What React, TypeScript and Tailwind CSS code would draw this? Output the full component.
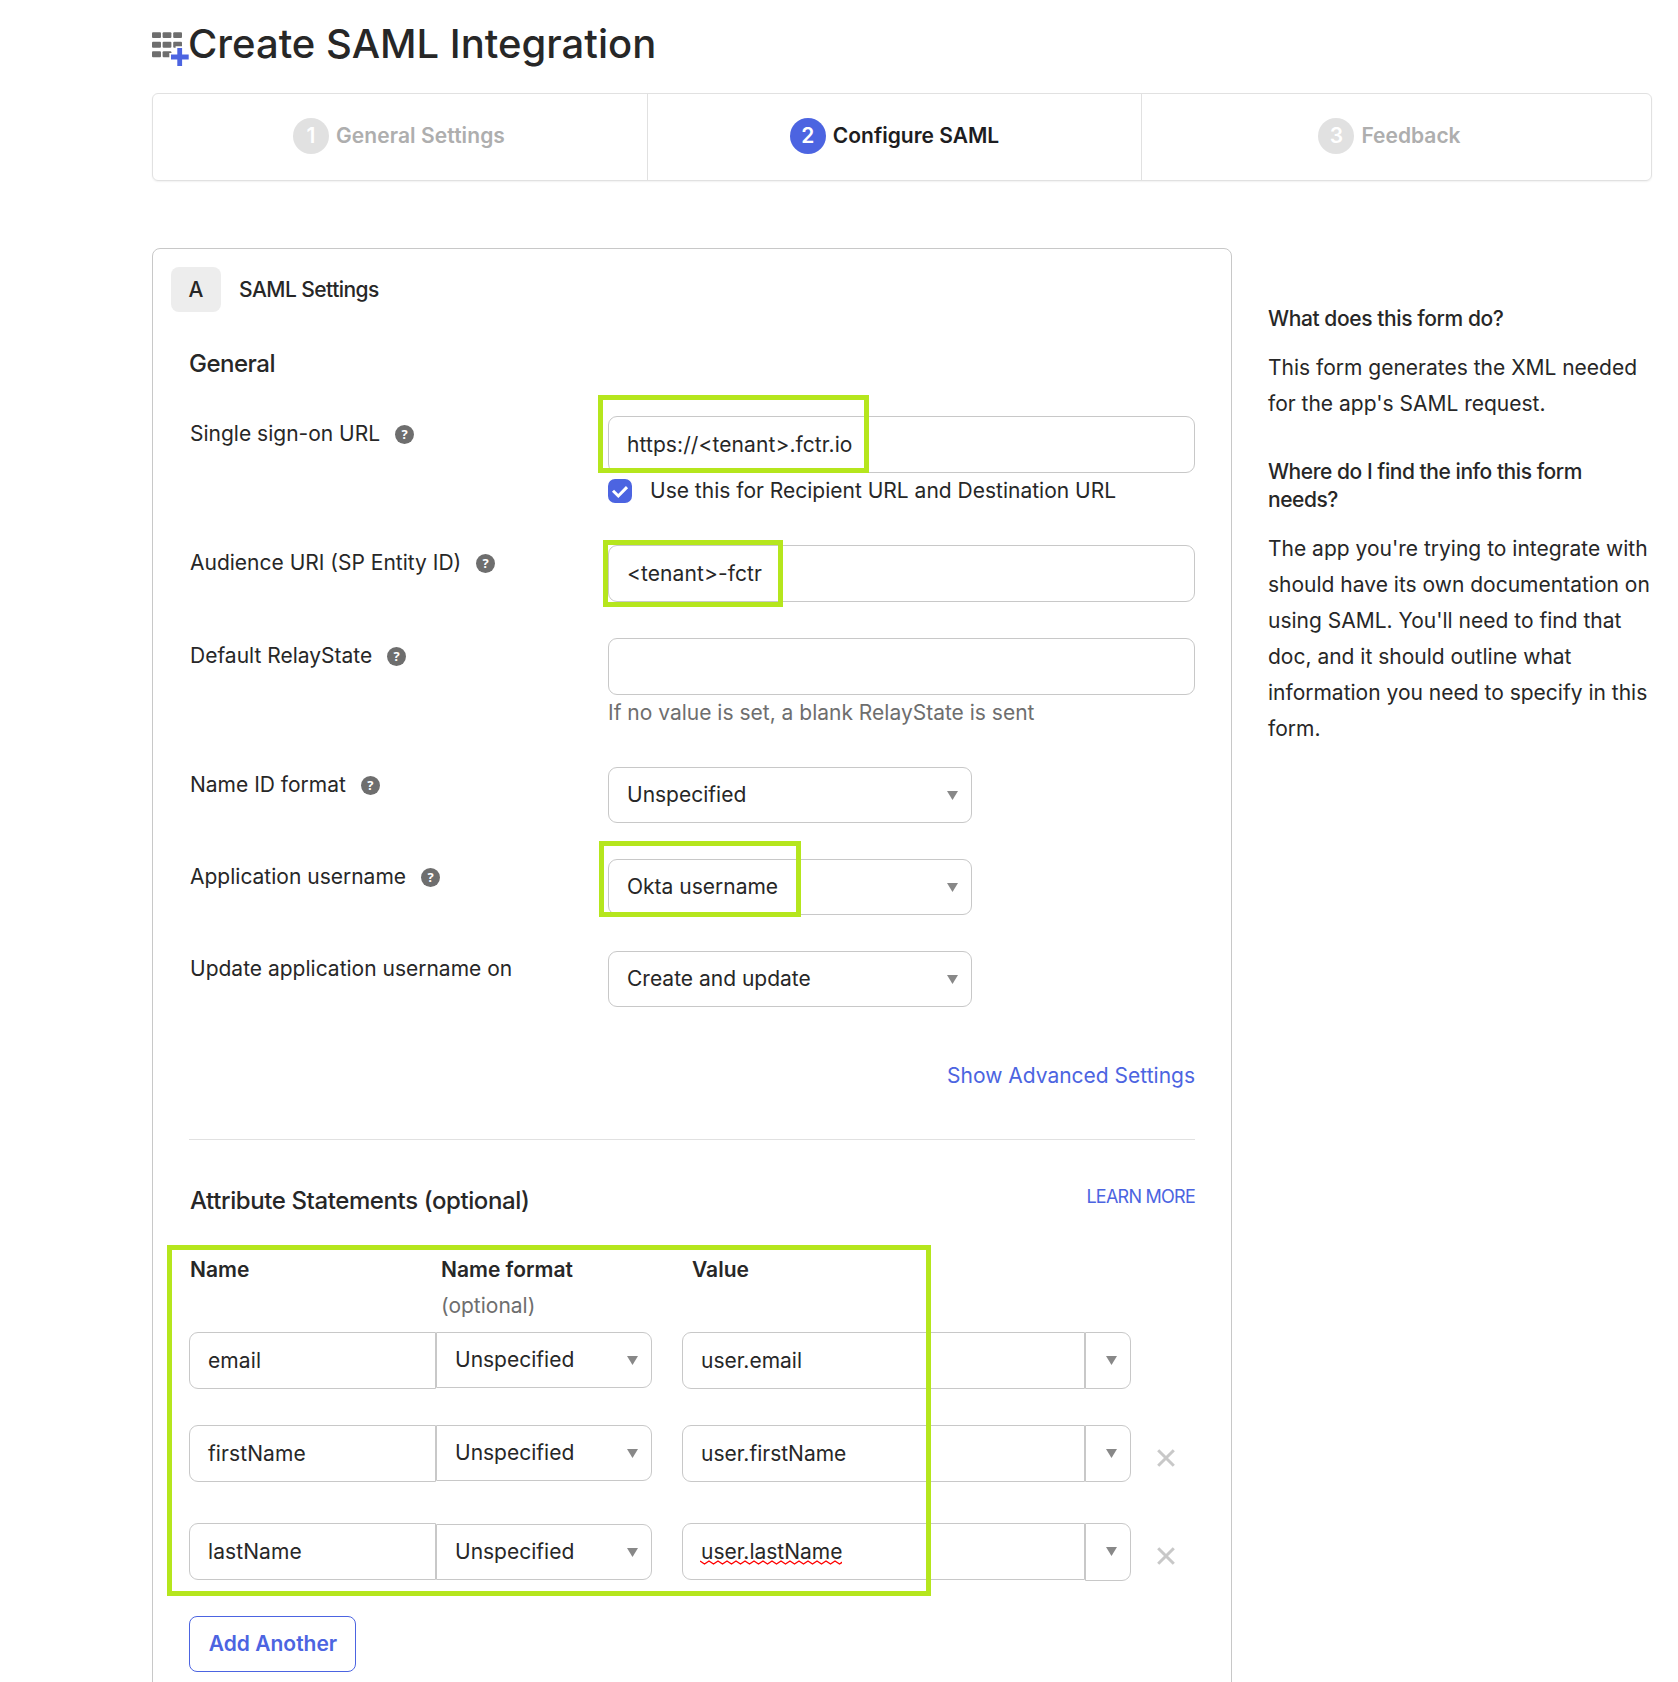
import type { ReactNode } from "react";

function GridPlusIcon() {
  return (
    <svg width="38" height="36" viewBox="0 0 38 36" className="block shrink-0">
      <g fill="#6e6e6e">
        <rect x="0" y="0.3" width="9" height="5.7" rx="1" />
        <rect x="10.6" y="0.3" width="8.8" height="5.7" rx="1" />
        <rect x="21.2" y="0.3" width="8.8" height="5.7" rx="1" />
        <rect x="0" y="9.8" width="9" height="6" rx="1" />
        <rect x="10.6" y="9.8" width="8.8" height="6" rx="1" />
        <rect x="21.2" y="9.8" width="8.8" height="6" rx="1" />
        <rect x="0" y="19.2" width="9" height="6" rx="1" />
        <rect x="10.6" y="19.2" width="8.8" height="6" rx="1" />
      </g>
      <path
        d="M25.3 16h4.8v6.6h6.6v4.8h-6.6V34h-4.8v-6.6H19v-4.8h6.3z"
        fill="#4c64e1"
        stroke="#fff"
        strokeWidth="3.4"
        paintOrder="stroke"
      />
    </svg>
  );
}

function Step({ n, label, active, className }: { n: number; label: string; active?: boolean; className: string }) {
  return (
    <div className={`flex items-center justify-center font-semibold ${className}`}>
      <span
        className={`flex size-9 items-center justify-center rounded-full text-white ${
          active ? "bg-[#4c64e1]" : "bg-[#e1e1e1]"
        }`}
      >
        {n}
      </span>
      <span className={`ml-[7px] ${active ? "text-[#1d1d21]" : "text-[#aeaeae]"}`}>{label}</span>
    </div>
  );
}

function Help() {
  return (
    <span className="ml-[15px] flex size-[19px] items-center justify-center rounded-full bg-[#6e6e6e] font-['Open_Sans'] text-[13px] leading-none font-bold text-white">
      ?
    </span>
  );
}

function Field({ label, help, children }: { label: string; help?: boolean; children: ReactNode }) {
  return (
    <div className="mb-9 flex items-start">
      <div className="flex h-9 w-[419px] shrink-0 items-center pl-px">
        <span>{label}</span>
        {help && <Help />}
      </div>
      <div className="relative flex-1">{children}</div>
    </div>
  );
}

function TextBox({ value, className = "rounded-[9px] tracking-[0.09px]" }: { value?: string; className?: string }) {
  return (
    <div className={`flex h-[57px] items-center border border-[#c8c8c8] bg-white px-[18px] ${className}`}>{value}</div>
  );
}

function Caret() {
  return (
    <svg width="11" height="9" viewBox="0 0 11 9" className="block">
      <path d="M0 0h11L5.5 9z" fill="#888" />
    </svg>
  );
}

function Select({ value, className }: { value: string; className: string }) {
  return (
    <div className={`flex h-14 items-center justify-between border border-[#c8c8c8] bg-white pr-[13px] pl-[18px] ${className}`}>
      <span>{value}</span>
      <span className="pt-px">
        <Caret />
      </span>
    </div>
  );
}

function Highlight({ className }: { className: string }) {
  return <div className={`pointer-events-none absolute border-5 border-[#b5e61d] ${className}`} />;
}

function RemoveIcon() {
  return (
    <svg width="18" height="18" viewBox="0 0 18 18" className="mt-6 ml-[26px] block">
      <path d="M1.2 1.2l15.6 15.6M16.8 1.2L1.2 16.8" stroke="#c8c8c8" strokeWidth="3" />
    </svg>
  );
}

function Squiggle() {
  const peaks = Array.from({ length: 16 }, (_, i) => `${i * 9 + 4.5} 4 ${i * 9 + 9} 1`).join(" ");
  return (
    <svg width="142" height="5" viewBox="0 0 142 5" className="absolute top-[26px] -left-px">
      <polyline points={`0 1 ${peaks}`} fill="none" stroke="#f00" strokeWidth="1.4" />
    </svg>
  );
}

type Attribute = {
  name: string;
  value: string;
  removable?: boolean;
  misspelled?: boolean;
  row: string;
  select: string;
  button: string;
};

const attributes: Attribute[] = [
  { name: "email", value: "user.email", row: "h-[93px]", select: "", button: "h-[57px]" },
  { name: "firstName", value: "user.firstName", removable: true, row: "h-[98px]", select: "", button: "h-[57px]" },
  {
    name: "lastName",
    value: "user.lastName",
    removable: true,
    misspelled: true,
    row: "h-[93px]",
    select: "mt-px",
    button: "h-[58px]",
  },
];

function AttributeRow({ a }: { a: Attribute }) {
  return (
    <div className={`flex items-start ${a.row}`}>
      <TextBox value={a.name} className="w-[247px] rounded-l-[9px] tracking-[0.09px]" />
      <Select value="Unspecified" className={`w-[216px] rounded-r-[9px] ${a.select}`} />
      <div className="ml-[30px] flex h-[57px] w-[403px] items-center rounded-l-[9px] border border-[#c8c8c8] px-[18px]">
        <span className="relative">
          {a.value}
          {a.misspelled && <Squiggle />}
        </span>
      </div>
      <div className={`flex w-[46px] items-center justify-center rounded-r-[9px] border border-[#c8c8c8] pb-px pl-1.5 ${a.button}`}>
        <Caret />
      </div>
      {a.removable && <RemoveIcon />}
    </div>
  );
}

export default function App() {
  return (
    <div className="h-[1682px] w-[1678px] overflow-hidden bg-white pt-[19px] pl-[152px] font-['Inter',sans-serif] text-[21px] leading-9 text-[#272727]">
      <header className="flex h-12 items-start">
        <div className="w-9 shrink-0 pt-[13px]">
          <GridPlusIcon />
        </div>
        <h1 className="pt-px text-[40px] leading-[48px] font-medium whitespace-nowrap">Create SAML Integration</h1>
      </header>

      <nav className="mt-[26px] flex h-[88px] w-[1500px] rounded-md border border-[#e1e1e1] pb-0.5 shadow-[0_1px_2px_rgba(0,0,0,0.06)]">
        <Step n={1} label="General Settings" className="-mb-0.5 w-[495px] border-r border-[#e1e1e1] pr-0.5 pb-0.5 tracking-[0.08px]" />
        <Step n={2} label="Configure SAML" active className="-mb-0.5 w-[494px] border-r border-[#e1e1e1] pb-0.5" />
        <Step n={3} label="Feedback" className="flex-1 pr-3.5" />
      </nav>

      <div className="mt-[67px] flex items-start">
        <section className="h-[1500px] w-[1080px] shrink-0 rounded-lg border border-[#c8c8c8] px-9 pt-[18px]">
          <div className="-ml-[18px] flex h-[45px] items-center font-medium">
            <span className="flex h-full w-[50px] items-center justify-center rounded-lg bg-[#ededed]">A</span>
            <h2 className="ml-[18px] tracking-[-0.54px]">SAML Settings</h2>
          </div>

          <h3 className="mt-[34px] h-[70px] text-[24px] leading-9 font-medium tracking-[-0.5px]">General</h3>

          <Field label="Single sign-on URL" help>
            <TextBox value="https://<tenant>.fctr.io" />
            <div className="flex h-9 items-center">
              <svg width="24" height="24" viewBox="0 0 24 24" className="block">
                <rect width="24" height="24" rx="7" fill="#4c64e1" />
                <path d="M5 11.8l5.3 5.2 8.7-8.9" fill="none" stroke="#fff" strokeWidth="3" />
              </svg>
              <span className="ml-[18px]">Use this for Recipient URL and Destination URL</span>
            </div>
            <Highlight className="-top-[21px] -left-[10px] h-[78px] w-[271px]" />
          </Field>
          <Field label="Audience URI (SP Entity ID)" help>
            <TextBox value="<tenant>-fctr" />
            <Highlight className="-top-[5px] -left-[5px] h-[67px] w-[180px]" />
          </Field>
          <Field label="Default RelayState" help>
            <TextBox />
            <div className="h-9 text-[#6e6e6e]">If no value is set, a blank RelayState is sent</div>
          </Field>
          <Field label="Name ID format" help>
            <Select value="Unspecified" className="w-[364px] rounded-[9px]" />
          </Field>
          <Field label="Application username" help>
            <Select value="Okta username" className="w-[364px] rounded-[9px]" />
            <Highlight className="-top-[18px] -left-[9px] h-[76px] w-[202px]" />
          </Field>
          <Field label="Update application username on">
            <Select value="Create and update" className="w-[364px] rounded-[9px]" />
          </Field>

          <div className="mt-[51px] text-right text-[#4c64e1]">Show Advanced Settings</div>
          <hr className="mt-[45px] border-t border-[#e1e1e1]" />

          <div className="mt-[43px] flex h-[69px] items-start justify-between">
            <h3 className="pl-px text-[24px] leading-9 font-medium tracking-[-0.4px]">Attribute Statements (optional)</h3>
            <a className="-mt-1 text-[18px] leading-9 tracking-[-0.75px] text-[#4c64e1]">LEARN MORE</a>
          </div>

          <div className="relative">
            <div className="flex h-20 items-start">
              <div className="w-[252px] pl-px font-semibold">Name</div>
              <div className="w-[251px]">
                <div className="font-semibold">Name format</div>
                <div className="text-[#6e6e6e]">(optional)</div>
              </div>
              <div className="font-semibold">Value</div>
            </div>
            {attributes.map((a) => (
              <AttributeRow key={a.name} a={a} />
            ))}
            <Highlight className="-top-[7px] -left-[22px] h-[351px] w-[764px]" />
          </div>

          <button className="flex h-14 w-[167px] items-center justify-center rounded-lg border border-[#4c64e1] pl-px font-semibold text-[#4c64e1]">
            Add Another
          </button>
        </section>

        <aside className="ml-9 w-[386px] pt-[57px] whitespace-nowrap">
          <h4 className="leading-7 font-medium tracking-[-0.4px]">What does this form do?</h4>
          <p className="mt-[17px]">
            This form generates the XML needed
            <br />
            for the app's SAML request.
          </p>
          <h4 className="mt-9 leading-7 font-medium tracking-[-0.45px]">
            Where do I find the info this form
            <br />
            needs?
          </h4>
          <p className="mt-[17px]">
            The app you're trying to integrate with
            <br />
            should have its own documentation on
            <br />
            using SAML. You'll need to find that
            <br />
            doc, and it should outline what
            <br />
            information you need to specify in this
            <br />
            form.
          </p>
        </aside>
      </div>
    </div>
  );
}
